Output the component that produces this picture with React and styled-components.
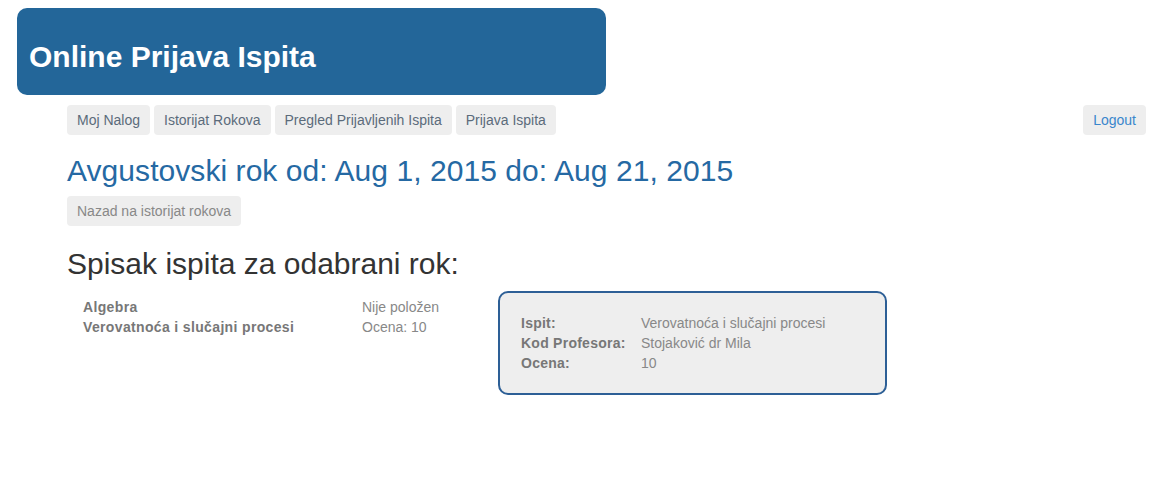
import React from "react";
import styled, { createGlobalStyle } from "styled-components";

const Global = createGlobalStyle`
  html, body { margin: 0; padding: 0; background: #fff; }
  body { font-family: "Liberation Sans", Arial, sans-serif; font-size: 14px; line-height: 20px; color: #333; }
`;

const Page = styled.div`
  padding: 8px 14px 40px 17px;
`;

const Banner = styled.header`
  width: 589px;
  height: 87px;
  box-sizing: border-box;
  background: #236699;
  border-radius: 10px;
  display: flex;
  align-items: flex-end;
  padding: 0 12px 21px;
`;

const BannerTitle = styled.h1`
  margin: 0;
  color: #fff;
  font-size: 30px;
  line-height: 34px;
  font-weight: bold;
`;

const Content = styled.main`
  padding-left: 50px;
`;

const NavBar = styled.nav`
  display: flex;
  justify-content: space-between;
  align-items: center;
  margin-top: 10px;
`;

const NavGroup = styled.div`
  display: flex;
  gap: 4px;
`;

const NavButton = styled.a`
  display: inline-block;
  height: 30px;
  line-height: 30px;
  padding: 0 10px;
  background: #eee;
  border-radius: 4px;
  font-size: 14px;
  color: ${(p) => p.$color || "#5b6b7b"};
  text-decoration: none;
  cursor: pointer;
`;

const Heading = styled.h2`
  margin: 18px 0 0;
  font-size: 30px;
  line-height: 36px;
  font-weight: normal;
  letter-spacing: ${(p) => p.$spacing || "0"};
  color: ${(p) => p.$color};
`;

const BackRow = styled.div`
  margin-top: 7px;
`;

const SubHeading = styled(Heading)`
  margin-top: 20px;
`;

const Body = styled.div`
  display: flex;
  align-items: flex-start;
  margin-top: 7px;
`;

const ExamList = styled.div`
  padding: 8px 0 0 16px;
  display: grid;
  grid-template-columns: 279px auto;
  width: 415px;
  font-size: 14px;
  line-height: 20px;
`;

const ExamName = styled.span`
  font-weight: bold;
  letter-spacing: 0.35px;
  color: #777;
`;

const ExamStatus = styled.span`
  color: #888;
`;

const Card = styled.section`
  width: 389px;
  height: 104px;
  box-sizing: border-box;
  margin-top: 2px;
  background: #eee;
  border: 2px solid #2d5f96;
  border-radius: 10px;
  padding: 20px 21px;
  display: grid;
  grid-template-columns: 120px auto;
  align-content: start;
  font-size: 14px;
  line-height: 20px;
`;

const CardLabel = styled.span`
  font-weight: bold;
  letter-spacing: 0.25px;
  color: #777;
`;

const CardValue = styled.span`
  color: #888;
`;

export default function App() {
  return (
    <>
      <Global />
      <Page>
        <Banner>
          <BannerTitle>Online Prijava Ispita</BannerTitle>
        </Banner>
        <Content>
          <NavBar>
            <NavGroup>
              <NavButton>Moj Nalog</NavButton>
              <NavButton>Istorijat Rokova</NavButton>
              <NavButton>Pregled Prijavljenih Ispita</NavButton>
              <NavButton>Prijava Ispita</NavButton>
            </NavGroup>
            <NavButton $color="#3a86cc">Logout</NavButton>
          </NavBar>
          <Heading $color="#2569a3" $spacing="0.06px">Avgustovski rok od: Aug 1, 2015 do: Aug 21, 2015</Heading>
          <BackRow>
            <NavButton $color="#888">Nazad na istorijat rokova</NavButton>
          </BackRow>
          <SubHeading $color="#333">Spisak ispita za odabrani rok:</SubHeading>
          <Body>
            <ExamList>
              <ExamName>Algebra</ExamName>
              <ExamStatus>Nije položen</ExamStatus>
              <ExamName>Verovatnoća i slučajni procesi</ExamName>
              <ExamStatus>Ocena: 10</ExamStatus>
            </ExamList>
            <Card>
              <CardLabel>Ispit:</CardLabel>
              <CardValue>Verovatnoća i slučajni procesi</CardValue>
              <CardLabel>Kod Profesora:</CardLabel>
              <CardValue>Stojaković dr Mila</CardValue>
              <CardLabel>Ocena:</CardLabel>
              <CardValue>10</CardValue>
            </Card>
          </Body>
        </Content>
      </Page>
    </>
  );
}
